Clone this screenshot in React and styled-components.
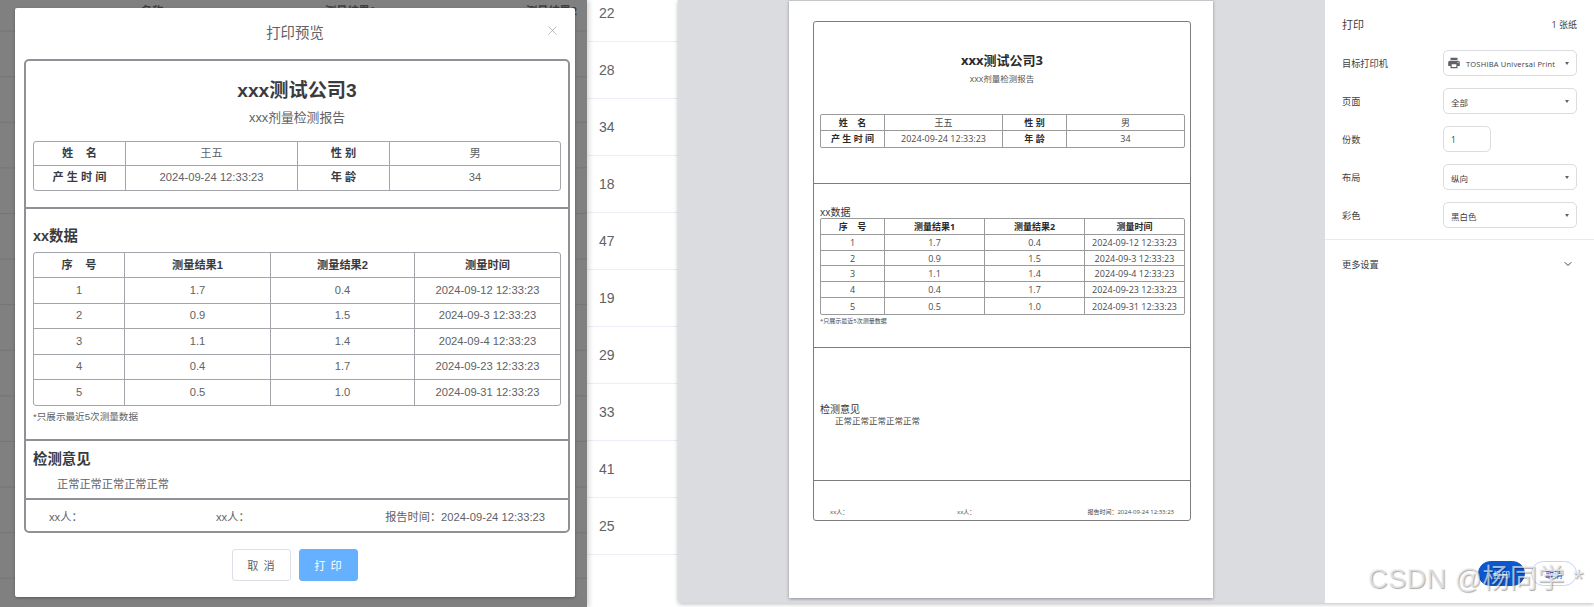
import React from 'react';
import styled, { createGlobalStyle } from 'styled-components';
import { X, ChevronDown } from 'lucide-react';

const GlobalStyle = createGlobalStyle`
  html, body { margin: 0; padding: 0; background: #fff; }
  #root { width: 1594px; height: 607px; overflow: hidden; }
`;

// same report is drawn twice: in the modal and on the print page
const modalMetrics = {
  font: '"Liberation Sans", "Noto Sans CJK SC", sans-serif',
  width: 546, radius: 5, border: '2px solid #8f9197', divider: '2px solid #8f9197',
  cellLine: '#a3a5ab', tableRadius: 3,
  title: 19.2, titleLh: 24, titleTop: 18, titleColor: '#3a3b3e',
  sub: 12.8, subLh: 16, subTop: 7, subColor: '#606266',
  pad: 7, tableTop: 15, cell: 11.2, cellColor: '#606266', headColor: '#3a3b3e',
  infoCols: [92, 172, 92, 170], infoRow: 24, dataCols: [91, 146, 144, 145], dataRow: 25.4,
  heading: 14.4, headingLh: 20, headingBold: 700, headingColor: '#3a3b3e',
  s1: 148, s2: 232, s3: 59, s4: 31,
  dataPad: 17, dataGap: 6, note: 9.6, noteLh: 12, noteTop: 5, noteColor: '#606266',
  opPad: 8, opGap: 8, opText: 11.2, opLh: 14, indent: 24,
  footLeft: 23, footRight: 23, footCol: 167, foot: 11.2, footLh: 14, footBottom: 7,
};

const pageMetrics = {
  font: '"Open Sans", "Noto Sans CJK SC", sans-serif',
  width: 378, radius: 3, border: '1px solid #7d7d7d', divider: '1px solid #7d7d7d',
  cellLine: '#9a9a9a', tableRadius: 2,
  title: 13, titleLh: 18, titleTop: 29, titleColor: '#2b2b2b',
  sub: 8.5, subLh: 12, subTop: 4, subColor: '#555',
  pad: 6, tableTop: 29, cell: 9, cellColor: '#4a4a4a', headColor: '#2b2b2b',
  infoCols: [64, 118, 64, 117], infoRow: 15.75, dataCols: [64, 100, 100, 99], dataRow: 15.83,
  heading: 10, headingLh: 12, headingBold: 400, headingColor: '#333',
  s1: 162, s2: 164, s3: 133, s4: 39,
  dataPad: 22, dataGap: 0, note: 6, noteLh: 8, noteTop: 2, noteColor: '#444',
  opPad: 55, opGap: 0, opText: 8.5, opLh: 12, indent: 15,
  footLeft: 16, footRight: 16, footCol: 127, foot: 6, footLh: 8, footBottom: 4,
};

const Screen = styled.div`
  display: flex;
  width: 1594px;
  height: 607px;
  position: relative;
  overflow: hidden;
  background: #fff;
`;

const DimPane = styled.div`
  position: relative;
  flex: 0 0 587px;
  min-width: 0;
  height: 607px;
  background-color: #808080;
  background-image: linear-gradient(#808080 45px, #747474 45px, #747474 45.6px);
  background-size: 100% 45.6px;
  background-position: 0 -14px;
  box-shadow: 2px 0 5px rgba(0, 0, 0, 0.18);
  z-index: 1;
`;

const DimHeader = styled.div`
  display: grid;
  grid-template-columns: 184px 201px 60px;
  padding: 4px 0 0 141px;
  font: 700 11.2px/14px "Liberation Sans", "Noto Sans CJK SC", sans-serif;
  color: #3f3f3f;
  white-space: nowrap;
`;

const Modal = styled.div`
  position: absolute;
  left: 15px;
  top: 8px;
  width: 560px;
  height: 589px;
  background: #fff;
  border-radius: 2px;
  box-shadow: 0 1px 3px rgba(0, 0, 0, 0.3);
`;

const ModalHeader = styled.div`
  position: relative;
  height: 51px;
  box-sizing: border-box;
  padding-top: 14px;
  text-align: center;
  font: 14.4px/22px "Liberation Sans", "Noto Sans CJK SC", sans-serif;
  color: #606266;
`;

const CloseButton = styled.span`
  position: absolute;
  top: 15px;
  right: 15px;
  display: flex;
  color: #909399;
`;

const ModalBody = styled.div`
  padding-left: 9px;
`;

const ModalActions = styled.div`
  display: flex;
  justify-content: center;
  gap: 8px;
  margin-top: 16px;
`;

const ModalButton = styled.button`
  width: 59px;
  height: 32px;
  padding: 0;
  border: 1px solid ${(p) => (p.$primary ? '#66b1ff' : '#dcdfe6')};
  border-radius: 3px;
  background: ${(p) => (p.$primary ? '#66b1ff' : '#fff')};
  color: ${(p) => (p.$primary ? '#fff' : '#606266')};
  font: 11.2px "Liberation Sans", "Noto Sans CJK SC", sans-serif;
  letter-spacing: 1px;
`;

const ReportBox = styled.div`
  width: ${(p) => p.$m.width}px;
  box-sizing: border-box;
  border: ${(p) => p.$m.border};
  border-radius: ${(p) => p.$m.radius}px;
  font-family: ${(p) => p.$m.font};
  background: #fff;
`;

const HeadSection = styled.div`
  height: ${(p) => p.$m.s1}px;
  box-sizing: border-box;
  padding: ${(p) => `${p.$m.titleTop}px ${p.$m.pad}px 0`};
  border-bottom: ${(p) => p.$m.divider};
`;

const Company = styled.div`
  text-align: center;
  font-weight: 700;
  font-size: ${(p) => p.$m.title}px;
  line-height: ${(p) => p.$m.titleLh}px;
  color: ${(p) => p.$m.titleColor};
`;

const SubTitle = styled.div`
  margin-top: ${(p) => p.$m.subTop}px;
  text-align: center;
  font-size: ${(p) => p.$m.sub}px;
  line-height: ${(p) => p.$m.subLh}px;
  color: ${(p) => p.$m.subColor};
`;

const DataSection = styled.div`
  height: ${(p) => p.$m.s2}px;
  box-sizing: border-box;
  padding: ${(p) => `${p.$m.dataPad}px ${p.$m.pad}px 0`};
  border-bottom: ${(p) => p.$m.divider};
`;

const OpinionSection = styled.div`
  height: ${(p) => p.$m.s3}px;
  box-sizing: border-box;
  padding: ${(p) => `${p.$m.opPad}px ${p.$m.pad}px 0`};
  border-bottom: ${(p) => p.$m.divider};
`;

const Heading = styled.div`
  font-size: ${(p) => p.$m.heading}px;
  line-height: ${(p) => p.$m.headingLh}px;
  font-weight: ${(p) => p.$m.headingBold};
  color: ${(p) => p.$m.headingColor};
`;

const Note = styled.div`
  margin-top: ${(p) => p.$m.noteTop}px;
  font-size: ${(p) => p.$m.note}px;
  line-height: ${(p) => p.$m.noteLh}px;
  color: ${(p) => p.$m.noteColor};
`;

const OpinionText = styled.div`
  margin-top: ${(p) => p.$m.opGap}px;
  padding-left: ${(p) => p.$m.indent}px;
  font-size: ${(p) => p.$m.opText}px;
  line-height: ${(p) => p.$m.opLh}px;
  color: ${(p) => p.$m.cellColor};
`;

const ReportFooter = styled.div`
  height: ${(p) => p.$m.s4}px;
  box-sizing: border-box;
  display: grid;
  grid-template-columns: ${(p) => p.$m.footCol}px 1fr auto;
  align-items: end;
  padding: ${(p) => `0 ${p.$m.footRight}px ${p.$m.footBottom}px ${p.$m.footLeft}px`};
  font-size: ${(p) => p.$m.foot}px;
  line-height: ${(p) => p.$m.footLh}px;
  color: ${(p) => p.$m.cellColor};
`;

const Table = styled.table`
  width: ${(p) => p.$cols.reduce((a, b) => a + b, 0)}px;
  margin-top: ${(p) => p.$top}px;
  table-layout: fixed;
  border-collapse: separate;
  border-spacing: 0;
  border: 1px solid ${(p) => p.$m.cellLine};
  border-radius: ${(p) => p.$m.tableRadius}px;
`;

const Col = styled.col`
  width: ${(p) => p.$w}px;
`;

const Cell = styled.td`
  height: ${(p) => p.$h}px;
  padding: 0;
  box-sizing: border-box;
  text-align: center;
  font-size: ${(p) => p.$m.cell}px;
  font-weight: ${(p) => (p.$head ? 700 : 400)};
  color: ${(p) => (p.$head ? p.$m.headColor : p.$m.cellColor)};
  border-right: 1px solid ${(p) => p.$m.cellLine};
  border-bottom: 1px solid ${(p) => p.$m.cellLine};
  line-height: 1;
  white-space: nowrap;
  tr:last-child > & { border-bottom: 0; }
  &:last-child { border-right: 0; }
`;

const infoRows = [
  [['姓\u00a0\u00a0\u00a0\u00a0名', true], ['王五'], ['性 别', true], ['男']],
  [['产 生 时 间', true], ['2024-09-24 12:33:23'], ['年 龄', true], ['34']],
];

const dataHead = ['序\u00a0\u00a0\u00a0\u00a0号', '测量结果1', '测量结果2', '测量时间'];

const dataRows = [
  ['1', '1.7', '0.4', '2024-09-12 12:33:23'],
  ['2', '0.9', '1.5', '2024-09-3 12:33:23'],
  ['3', '1.1', '1.4', '2024-09-4 12:33:23'],
  ['4', '0.4', '1.7', '2024-09-23 12:33:23'],
  ['5', '0.5', '1.0', '2024-09-31 12:33:23'],
];

function Report({ m }) {
  return (
    <ReportBox $m={m}>
      <HeadSection $m={m}>
        <Company $m={m}>xxx测试公司3</Company>
        <SubTitle $m={m}>xxx剂量检测报告</SubTitle>
        <Table $m={m} $cols={m.infoCols} $top={m.tableTop}>
          <colgroup>{m.infoCols.map((w, i) => <Col key={i} $w={w} />)}</colgroup>
          <tbody>
            {infoRows.map((row, r) => (
              <tr key={r}>
                {row.map(([text, head], c) => (
                  <Cell key={c} $m={m} $h={m.infoRow} $head={head}>{text}</Cell>
                ))}
              </tr>
            ))}
          </tbody>
        </Table>
      </HeadSection>
      <DataSection $m={m}>
        <Heading $m={m}>xx数据</Heading>
        <Table $m={m} $cols={m.dataCols} $top={m.dataGap}>
          <colgroup>{m.dataCols.map((w, i) => <Col key={i} $w={w} />)}</colgroup>
          <tbody>
            <tr>
              {dataHead.map((text) => (
                <Cell key={text} $m={m} $h={m.dataRow} $head>{text}</Cell>
              ))}
            </tr>
            {dataRows.map((row) => (
              <tr key={row[0]}>
                {row.map((text, c) => (
                  <Cell key={c} $m={m} $h={m.dataRow}>{text}</Cell>
                ))}
              </tr>
            ))}
          </tbody>
        </Table>
        <Note $m={m}>*只展示最近5次测量数据</Note>
      </DataSection>
      <OpinionSection $m={m}>
        <Heading $m={m}>检测意见</Heading>
        <OpinionText $m={m}>正常正常正常正常正常</OpinionText>
      </OpinionSection>
      <ReportFooter $m={m}>
        <span>xx人：</span>
        <span>xx人：</span>
        <span>报告时间：2024-09-24 12:33:23</span>
      </ReportFooter>
    </ReportBox>
  );
}

const NumberColumn = styled.div`
  flex: 0 0 91px;
  margin-top: -15px;
`;

const NumberRow = styled.div`
  height: 57px;
  box-sizing: border-box;
  padding-left: 12px;
  display: flex;
  align-items: center;
  border-bottom: 1px solid #ebeef5;
  font: 14px "Liberation Sans", sans-serif;
  color: #606266;
`;

const PrintDialog = styled.div`
  flex: 0 0 916px;
  min-width: 0;
  display: flex;
  height: 603px;
  border-bottom-left-radius: 3px;
  box-shadow: 0 1px 4px rgba(0, 0, 0, 0.28);
  z-index: 1;
`;

const PreviewArea = styled.div`
  flex: 0 0 647px;
  box-sizing: border-box;
  padding-left: 111px;
  background: #dadce0;
  border-bottom-left-radius: 3px;
`;

const Page = styled.div`
  width: 424px;
  height: 598px;
  box-sizing: border-box;
  padding: 20px 0 0 24px;
  background: #fff;
  border-top: 1px solid #c4c6ca;
  box-shadow: 0 1px 3px rgba(0, 0, 0, 0.35);
`;

const SidePanel = styled.div`
  flex: 1;
  display: flex;
  flex-direction: column;
  background: #fff;
  font-family: "Open Sans", "Noto Sans CJK SC", sans-serif;
  color: #3c4043;
`;

const PanelTitle = styled.div`
  height: 44px;
  box-sizing: border-box;
  padding: 4px 17px 0;
  display: flex;
  align-items: center;
  justify-content: space-between;
  font-size: 11px;
`;

const SheetCount = styled.span`
  font-size: 9px;
`;

const SettingRow = styled.div`
  height: 38px;
  padding-left: 17px;
  display: grid;
  grid-template-columns: 101px 1fr;
  align-items: center;
  font-size: 9.2px;
`;

const SelectBox = styled.div`
  width: 134px;
  height: 26px;
  box-sizing: border-box;
  padding: 0 7px 0 ${(p) => (p.$icon ? 3 : 7)}px;
  display: flex;
  align-items: center;
  gap: 5px;
  border: 1px solid #dadce0;
  border-radius: 5px;
  font-size: 8.5px;
`;

const SelectText = styled.span`
  flex: 1;
  padding-top: 2px;
  white-space: nowrap;
`;

const PrinterName = styled(SelectText)`
  font-size: 7.5px;
  letter-spacing: 0.2px;
`;

const Caret = styled.span`
  width: 0;
  height: 0;
  border-left: 2.5px solid transparent;
  border-right: 2.5px solid transparent;
  border-top: 3px solid #5f6368;
`;

const CopiesInput = styled.div`
  width: 48px;
  height: 26px;
  box-sizing: border-box;
  padding-left: 7px;
  display: flex;
  align-items: center;
  border: 1px solid #dadce0;
  border-radius: 5px;
  font-size: 8.5px;
`;

const MoreRow = styled.div`
  height: 48px;
  margin-top: 5px;
  padding: 0 20px 0 17px;
  display: flex;
  align-items: center;
  justify-content: space-between;
  border-top: 1px solid #e8eaed;
  font-size: 9.2px;
`;

const PanelActions = styled.div`
  margin-top: auto;
  padding: 0 17px 17px 0;
  display: flex;
  justify-content: flex-end;
  gap: 6px;
`;

const PillButton = styled.button`
  width: ${(p) => (p.$primary ? 47 : 46)}px;
  height: 25px;
  padding: 0;
  border: 1px solid ${(p) => (p.$primary ? '#0b57d0' : '#c2d7f5')};
  border-radius: 13px;
  background: ${(p) => (p.$primary ? '#0b57d0' : '#fff')};
  color: ${(p) => (p.$primary ? '#fff' : '#0b57d0')};
  font: 8.5px "Open Sans", "Noto Sans CJK SC", sans-serif;
`;

const Watermark = styled.div`
  position: absolute;
  left: 1368px;
  top: 562px;
  z-index: 2;
  font: 27px/34px "Liberation Sans", "Noto Sans CJK SC", sans-serif;
  letter-spacing: 0.5px;
  color: rgba(238, 238, 238, 0.7);
  text-shadow: 1px 1px 1px rgba(0, 0, 0, 0.32);
  white-space: nowrap;
`;

const settings = [
  { label: '页面', value: '全部' },
  { label: '布局', value: '纵向' },
  { label: '彩色', value: '黑白色' },
];

const numbers = [22, 28, 34, 18, 47, 19, 29, 33, 41, 25];

function PrinterIcon() {
  return (
    <svg width="14" height="14" viewBox="0 0 24 24" fill="#5f6368">
      <path d="M19 8H5c-1.66 0-3 1.34-3 3v6h4v4h12v-4h4v-6c0-1.66-1.34-3-3-3zm-3 11H8v-5h8v5zm3-7c-.55 0-1-.45-1-1s.45-1 1-1 1 .45 1 1-.45 1-1 1zm-1-9H6v4h12V3z" />
    </svg>
  );
}

function SettingSelect({ label, value }) {
  return (
    <SettingRow>
      <span>{label}</span>
      <SelectBox>
        <SelectText>{value}</SelectText>
        <Caret />
      </SelectBox>
    </SettingRow>
  );
}

export default function App() {
  return (
    <Screen>
      <GlobalStyle />
      <DimPane>
        <DimHeader>
          <span>名称</span>
          <span>测量结果1</span>
          <span>测量结果2</span>
        </DimHeader>
        <Modal>
          <ModalHeader>
            打印预览
            <CloseButton><X size={15} strokeWidth={1} /></CloseButton>
          </ModalHeader>
          <ModalBody>
            <Report m={modalMetrics} />
          </ModalBody>
          <ModalActions>
            <ModalButton>取 消</ModalButton>
            <ModalButton $primary>打 印</ModalButton>
          </ModalActions>
        </Modal>
      </DimPane>
      <NumberColumn>
        {numbers.map((n, i) => <NumberRow key={i}>{n}</NumberRow>)}
      </NumberColumn>
      <PrintDialog>
        <PreviewArea>
          <Page>
            <Report m={pageMetrics} />
          </Page>
        </PreviewArea>
        <SidePanel>
          <PanelTitle>
            <span>打印</span>
            <SheetCount>1 张纸</SheetCount>
          </PanelTitle>
          <SettingRow>
            <span>目标打印机</span>
            <SelectBox $icon>
              <PrinterIcon />
              <PrinterName>TOSHIBA Universal Print</PrinterName>
              <Caret />
            </SelectBox>
          </SettingRow>
          <SettingSelect {...settings[0]} />
          <SettingRow>
            <span>份数</span>
            <CopiesInput>1</CopiesInput>
          </SettingRow>
          <SettingSelect {...settings[1]} />
          <SettingSelect {...settings[2]} />
          <MoreRow>
            <span>更多设置</span>
            <ChevronDown size={12} strokeWidth={2} color="#3c4043" />
          </MoreRow>
          <PanelActions>
            <PillButton $primary>打印</PillButton>
            <PillButton>取消</PillButton>
          </PanelActions>
        </SidePanel>
      </PrintDialog>
      <Watermark>CSDN @杨同学 *</Watermark>
    </Screen>
  );
}
